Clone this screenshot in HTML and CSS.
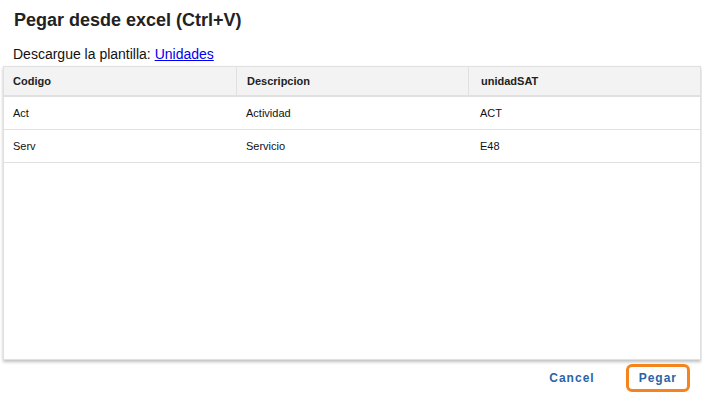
FILE: index.html
```html
<!DOCTYPE html>
<html lang="es">
  <head>
    <meta charset="UTF-8" />
    <meta name="viewport" content="width=device-width, initial-scale=1.0" />
    <title>Pegar desde excel</title>
    <link rel="stylesheet" href="styles.css">
  </head>
  <body>
    <section class="dialog">
      <h2 class="dialog-title">Pegar desde excel (Ctrl+V)</h2>
      <p class="template">
        Descargue la plantilla: <a href="#">Unidades</a>
      </p>

      <div class="grid">
        <div class="grid-row grid-head">
          <div class="cell">Codigo</div>
          <div class="cell">Descripcion</div>
          <div class="cell">unidadSAT</div>
        </div>
        <div class="grid-row">
          <div class="cell">Act</div>
          <div class="cell">Actividad</div>
          <div class="cell">ACT</div>
        </div>
        <div class="grid-row">
          <div class="cell">Serv</div>
          <div class="cell">Servicio</div>
          <div class="cell">E48</div>
        </div>
      </div>

      <div class="actions">
        <button class="btn">Cancel</button>
        <button class="btn btn-focus">Pegar</button>
      </div>
    </section>
  </body>
</html>
```

FILE: styles.css
```css
* {
  box-sizing: border-box;
}

body {
  margin: 0;
  font-family: "Liberation Sans", Arial, sans-serif;
  color: #222;
  background: #fff;
}

.dialog {
  padding: 9px 1px 0 3px;
}

.dialog-title {
  margin: 0 0 0 11px;
  font-size: 18px;
  line-height: 22px;
  font-weight: bold;
  color: #222;
}

.template {
  margin: 15px 0 3px 10px;
  font-size: 14px;
  line-height: 17px;
  color: #111;
}

.template a {
  color: #0000ee;
}

/* the pasted rows */
.grid {
  height: 294px;
  border: 1px solid #e0e0e0;
  box-shadow: 0 2px 3px rgba(0, 0, 0, 0.25);
}

.grid-row {
  display: grid;
  grid-template-columns: 232px 232px 1fr;
  height: 33px;
  border-bottom: 1px solid #e0e0e0;
  font-size: 11px;
  color: #111;
}

.grid-head {
  height: 30px;
  background-color: #f3f3f3;
  border-bottom: 2px solid #e0e0e0;
  font-weight: bold;
  color: #222;
}

.grid-head .cell + .cell {
  border-left: 1px solid #e0e0e0;
}

.cell {
  display: flex;
  align-items: center;
  padding-left: 9px;
}

.cell:nth-child(2) {
  padding-left: 10px;
}

.cell:nth-child(3) {
  padding-left: 12px;
}

.actions {
  display: flex;
  justify-content: flex-end;
  align-items: center;
  gap: 18px;
  margin-top: 4px;
  padding-right: 11px;
}

.btn {
  border: 3px solid transparent;
  border-radius: 6px;
  background: none;
  padding: 4px 10px;
  font-family: "Liberation Sans", Arial, sans-serif;
  font-size: 12px;
  font-weight: bold;
  letter-spacing: 1px;
  color: #2a63a8;
}

.btn-focus {
  border-color: #f5841f;
}
```
